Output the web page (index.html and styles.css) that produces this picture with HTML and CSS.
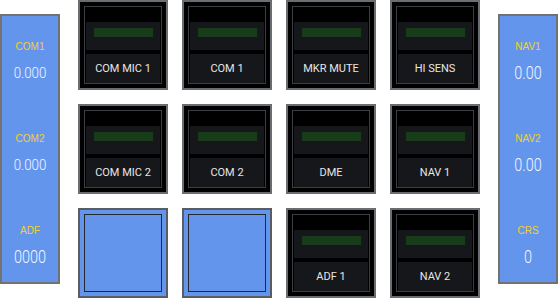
FILE: index.html
```html
<!DOCTYPE html>
<html lang="en">

<head>
  <meta charset="UTF-8" />
  <title>Audio Panel</title>
  <link rel="stylesheet" href="styles.css">
</head>

<body>
  <div class="panel">
    <div class="side">
      <div class="group">
        <div class="label">COM1</div>
        <div class="value small">0.000</div>
      </div>
      <div class="group">
        <div class="label">COM2</div>
        <div class="value small">0.000</div>
      </div>
      <div class="group">
        <div class="label">ADF</div>
        <div class="value">0000</div>
      </div>
    </div>

    <div class="buttons">
      <div class="btn"><div class="frame"><div class="cap"></div><div class="lamp"><span></span></div><div class="gap"></div><div class="name">COM MIC 1</div></div></div>
      <div class="btn"><div class="frame"><div class="cap"></div><div class="lamp"><span></span></div><div class="gap"></div><div class="name">COM 1</div></div></div>
      <div class="btn"><div class="frame"><div class="cap"></div><div class="lamp"><span></span></div><div class="gap"></div><div class="name">MKR MUTE</div></div></div>
      <div class="btn"><div class="frame"><div class="cap"></div><div class="lamp"><span></span></div><div class="gap"></div><div class="name">HI SENS</div></div></div>

      <div class="btn"><div class="frame"><div class="cap"></div><div class="lamp"><span></span></div><div class="gap"></div><div class="name">COM MIC 2</div></div></div>
      <div class="btn"><div class="frame"><div class="cap"></div><div class="lamp"><span></span></div><div class="gap"></div><div class="name">COM 2</div></div></div>
      <div class="btn"><div class="frame"><div class="cap"></div><div class="lamp"><span></span></div><div class="gap"></div><div class="name">DME</div></div></div>
      <div class="btn"><div class="frame"><div class="cap"></div><div class="lamp"><span></span></div><div class="gap"></div><div class="name">NAV 1</div></div></div>

      <div class="btn blank"><div class="frame"></div></div>
      <div class="btn blank"><div class="frame"></div></div>
      <div class="btn"><div class="frame"><div class="cap"></div><div class="lamp"><span></span></div><div class="gap"></div><div class="name">ADF 1</div></div></div>
      <div class="btn"><div class="frame"><div class="cap"></div><div class="lamp"><span></span></div><div class="gap"></div><div class="name">NAV 2</div></div></div>
    </div>

    <div class="side">
      <div class="group">
        <div class="label">NAV1</div>
        <div class="value">0.00</div>
      </div>
      <div class="group">
        <div class="label">NAV2</div>
        <div class="value">0.00</div>
      </div>
      <div class="group">
        <div class="label">CRS</div>
        <div class="value">0</div>
      </div>
    </div>
  </div>
</body>

</html>
```

FILE: styles.css
```css
* {
  box-sizing: border-box;
  margin: 0;
  padding: 0;
}

body {
  font-family: 'Liberation Sans', Arial, sans-serif;
  background: #fff;
  width: 558px;
  height: 298px;
  overflow: hidden;
}

.panel {
  display: flex;
  align-items: flex-start;
  gap: 18px;
}

/* side readouts */
.side {
  width: 60px;
  height: 270px;
  margin-top: 14px;
  background: #6495ed;
  border: 2px solid #727272;
  padding-top: 25px;
  display: flex;
  flex-direction: column;
  gap: 52px;
  text-align: center;
}

.group {
  height: 40px;
}

.label {
  font-size: 10px;
  line-height: 12px;
  color: #f2d21c;
}

.value {
  margin-top: 12px;
  font-family: Roboto, sans-serif;
  font-weight: 300;
  font-size: 18px;
  line-height: 16px;
  color: #f4f6ff;
  transform: scaleX(0.8);
}

.value.small {
  font-size: 14px;
  transform: scaleX(0.95);
}

/* button grid */
.buttons {
  display: grid;
  grid-template-columns: repeat(4, 90px);
  grid-auto-rows: 90px;
  gap: 14px;
}

.btn {
  border: 2px solid #6a6e73;
  background: #000;
  padding: 4px;
}

.frame {
  height: 100%;
  border: 1px solid #3b3e43;
  padding: 0 1px;
  display: flex;
  flex-direction: column;
}

.cap {
  height: 15px;
}

.lamp {
  height: 28px;
  background: #15171a;
  padding: 6px 7px 0 8px;
}

.lamp span {
  display: block;
  height: 9px;
  background: #183b19;
}

.gap {
  height: 4px;
}

.name {
  flex: 1;
  background: #16171a;
  color: #e6e6e6;
  font-family: Roboto, sans-serif;
  font-size: 11px;
  display: flex;
  align-items: center;
  justify-content: center;
}

.btn.blank {
  background: #6495ed;
  border-color: #585d63;
}

.btn.blank .frame {
  border-color: #25282d;
}
```
